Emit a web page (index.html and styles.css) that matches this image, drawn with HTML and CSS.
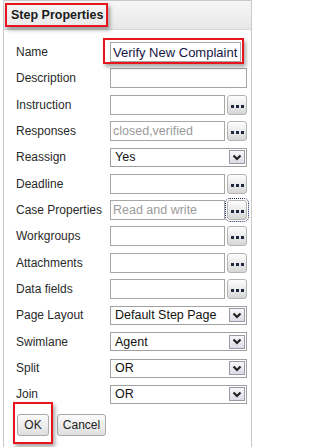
FILE: index.html
```html
<!DOCTYPE html>
<html>
<head>
<meta charset="utf-8">
<link rel="stylesheet" href="styles.css">
</head>
<body>
<div class="panel">
  <div class="header"><span class="title">Step Properties</span></div>
  <div class="form">
    <label class="lbl">Name</label>
    <div class="ctl"><span class="mark-name"><input class="text name" value="Verify New Complaint"></span></div>

    <label class="lbl">Description</label>
    <div class="ctl"><input class="text full" value=""></div>

    <label class="lbl">Instruction</label>
    <div class="ctl"><input class="text short" value=""><button class="dots"><svg width="13" height="3" viewBox="0 0 13 3"><rect x="0" y="0" width="3" height="3"/><rect x="5" y="0" width="3" height="3"/><rect x="10" y="0" width="3" height="3"/></svg></button></div>

    <label class="lbl">Responses</label>
    <div class="ctl"><input class="text short ro" value="closed,verified" readonly><button class="dots"><svg width="13" height="3" viewBox="0 0 13 3"><rect x="0" y="0" width="3" height="3"/><rect x="5" y="0" width="3" height="3"/><rect x="10" y="0" width="3" height="3"/></svg></button></div>

    <label class="lbl">Reassign</label>
    <div class="ctl"><div class="select"><span class="val">Yes</span><span class="arrow"><svg width="10" height="7" viewBox="0 0 10 7"><path d="M1.5 1.5 L5 5 L8.5 1.5"/></svg></span></div></div>

    <label class="lbl">Deadline</label>
    <div class="ctl"><input class="text short" value=""><button class="dots"><svg width="13" height="3" viewBox="0 0 13 3"><rect x="0" y="0" width="3" height="3"/><rect x="5" y="0" width="3" height="3"/><rect x="10" y="0" width="3" height="3"/></svg></button></div>

    <label class="lbl">Case Properties</label>
    <div class="ctl"><input class="text short ro" value="Read and write" readonly><button class="dots focus"><svg width="13" height="3" viewBox="0 0 13 3"><rect x="0" y="0" width="3" height="3"/><rect x="5" y="0" width="3" height="3"/><rect x="10" y="0" width="3" height="3"/></svg></button></div>

    <label class="lbl">Workgroups</label>
    <div class="ctl"><input class="text short" value=""><button class="dots"><svg width="13" height="3" viewBox="0 0 13 3"><rect x="0" y="0" width="3" height="3"/><rect x="5" y="0" width="3" height="3"/><rect x="10" y="0" width="3" height="3"/></svg></button></div>

    <label class="lbl">Attachments</label>
    <div class="ctl"><input class="text short" value=""><button class="dots"><svg width="13" height="3" viewBox="0 0 13 3"><rect x="0" y="0" width="3" height="3"/><rect x="5" y="0" width="3" height="3"/><rect x="10" y="0" width="3" height="3"/></svg></button></div>

    <label class="lbl">Data fields</label>
    <div class="ctl"><input class="text short" value=""><button class="dots"><svg width="13" height="3" viewBox="0 0 13 3"><rect x="0" y="0" width="3" height="3"/><rect x="5" y="0" width="3" height="3"/><rect x="10" y="0" width="3" height="3"/></svg></button></div>

    <label class="lbl">Page Layout</label>
    <div class="ctl"><div class="select"><span class="val">Default Step Page</span><span class="arrow"><svg width="10" height="7" viewBox="0 0 10 7"><path d="M1.5 1.5 L5 5 L8.5 1.5"/></svg></span></div></div>

    <label class="lbl">Swimlane</label>
    <div class="ctl"><div class="select"><span class="val">Agent</span><span class="arrow"><svg width="10" height="7" viewBox="0 0 10 7"><path d="M1.5 1.5 L5 5 L8.5 1.5"/></svg></span></div></div>

    <label class="lbl">Split</label>
    <div class="ctl"><div class="select"><span class="val">OR</span><span class="arrow"><svg width="10" height="7" viewBox="0 0 10 7"><path d="M1.5 1.5 L5 5 L8.5 1.5"/></svg></span></div></div>

    <label class="lbl">Join</label>
    <div class="ctl"><div class="select"><span class="val">OR</span><span class="arrow"><svg width="10" height="7" viewBox="0 0 10 7"><path d="M1.5 1.5 L5 5 L8.5 1.5"/></svg></span></div></div>
  </div>
  <div class="actions">
    <span class="mark-ok"><button class="btn ok">OK</button></span>
    <button class="btn">Cancel</button>
  </div>
</div>
</body>
</html>
```

FILE: styles.css
```css
html, body {
  margin: 0;
  padding: 0;
  background: #ffffff;
}
body {
  font-family: "Liberation Sans", Arial, sans-serif;
  width: 254px;
  height: 447px;
  overflow: hidden;
}
.panel {
  margin-left: 3px;
  width: 249px;
  height: 447px;
  box-sizing: border-box;
  border: 1px solid #c9c9c9;
  border-bottom: none;
  background: #ffffff;
}
.header {
  height: 29px;
  box-sizing: border-box;
  background: linear-gradient(#f6f6f6, #e8e8e8);
  border-bottom: 1px solid #d6d6d6;
  padding: 2px 0 0 1px;
}
.title {
  display: inline-block;
  box-sizing: border-box;
  height: 24px;
  width: 103px;
  border: 2px solid #e8161c;
  padding: 3px 0 0 4px;
  font-size: 12.5px;
  font-weight: bold;
  color: #1b1b1b;
  box-shadow: 2px 3px 4px rgba(0,0,0,0.35);
}
.form {
  display: grid;
  grid-template-columns: 94px 137px;
  grid-auto-rows: 26.33px;
  align-items: center;
  padding: 9px 0 0 12px;
}
.lbl {
  font-size: 12px;
  color: #2a2a2a;
  white-space: nowrap;
}
.ctl {
  display: flex;
  align-items: center;
  gap: 2px;
  height: 20px;
}
.text {
  appearance: none;
  box-sizing: border-box;
  height: 20px;
  margin: 0;
  border: 1px solid #a6a6a6;
  border-radius: 0;
  padding: 0 2px;
  font-family: "Liberation Sans", Arial, sans-serif;
  font-size: 12.5px;
  color: #222;
  background: #fff;
  outline: none;
}
.full { width: 137px; }
.short { width: 115px; }
.ro { color: #9a9a9a; }
.mark-name {
  position: relative;
  display: block;
}
.name {
  width: 131px;
  font-size: 13px;
  color: #151545;
}
.mark-name::after {
  content: "";
  position: absolute;
  left: -7px;
  top: -4px;
  right: -3px;
  bottom: -2px;
  border: 2px solid #e8161c;
  box-shadow: 2px 3px 4px rgba(0,0,0,0.35);
  pointer-events: none;
}
.dots {
  appearance: none;
  box-sizing: border-box;
  width: 20px;
  height: 20px;
  margin: 0;
  padding: 3px 0 0 0;
  border: 1px solid #b4b4b4;
  border-radius: 3px;
  background: linear-gradient(#fdfdfd, #e9e9e9 55%, #d6d6d6);
  display: flex;
  align-items: center;
  justify-content: center;
}
.dots svg { fill: #1d2840; display: block; }
.dots.focus {
  outline: 1px dotted #1a2a60;
  outline-offset: 1px;
}
.select {
  box-sizing: border-box;
  width: 138px;
  height: 19px;
  border: 1px solid #a0a0a0;
  display: flex;
  align-items: center;
  justify-content: space-between;
  padding: 0 1px 0 4px;
  background: #fff;
}
.val {
  font-size: 12.5px;
  color: #111;
}
.arrow {
  box-sizing: border-box;
  width: 16px;
  height: 14px;
  border: 1px solid #9a9aa6;
  background: linear-gradient(#f7f7fa, #dcdce6);
  display: flex;
  align-items: center;
  justify-content: center;
}
.arrow svg path {
  fill: none;
  stroke: #222;
  stroke-width: 2.2;
}
.actions {
  display: flex;
  gap: 8px;
  padding: 6px 0 0 13px;
}
.mark-ok {
  position: relative;
  display: block;
}
.mark-ok::after {
  content: "";
  position: absolute;
  left: -4px;
  top: -12px;
  right: -4px;
  bottom: -8px;
  border: 2px solid #e8161c;
  box-shadow: 2px 3px 4px rgba(0,0,0,0.35);
  pointer-events: none;
}
.btn {
  appearance: none;
  box-sizing: border-box;
  height: 22px;
  margin: 0;
  padding: 0;
  border: 1px solid #a9a9a9;
  border-radius: 3px;
  background: linear-gradient(#fbfbfb, #ececec 55%, #dedede);
  font-family: "Liberation Sans", Arial, sans-serif;
  font-size: 12px;
  color: #222;
  display: block;
}
.ok { width: 32px; }
.btn:not(.ok) { width: 49px; }
```
